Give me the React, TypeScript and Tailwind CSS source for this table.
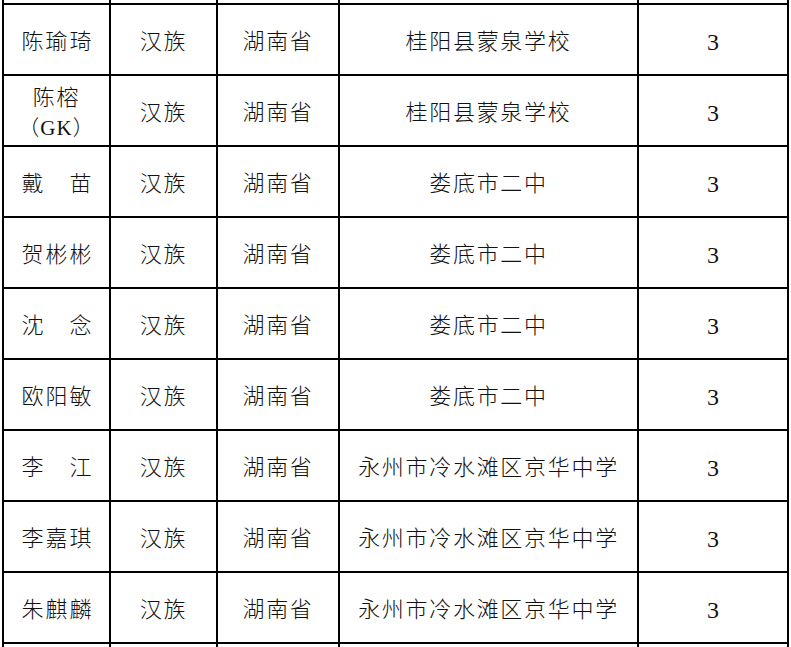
import React from "react";

type Row = {
  name: string[];
  note?: string;
  school: string;
};

const rows: Row[] = [
  { name: ["陈", "瑜", "琦"], school: "桂阳县蒙泉学校" },
  { name: ["陈榕"], note: "（GK）", school: "桂阳县蒙泉学校" },
  { name: ["戴", "苗"], school: "娄底市二中" },
  { name: ["贺", "彬", "彬"], school: "娄底市二中" },
  { name: ["沈", "念"], school: "娄底市二中" },
  { name: ["欧", "阳", "敏"], school: "娄底市二中" },
  { name: ["李", "江"], school: "永州市冷水滩区京华中学" },
  { name: ["李", "嘉", "琪"], school: "永州市冷水滩区京华中学" },
  { name: ["朱", "麒", "麟"], school: "永州市冷水滩区京华中学" },
];

const font = {
  fontFamily: '"Liberation Serif", "Noto Sans CJK SC", serif',
};

function Cell({ children }: { children?: React.ReactNode }) {
  return (
    <div className="flex items-center justify-center bg-white pt-[5px] text-[22px] font-light leading-none text-[#111]">
      {children}
    </div>
  );
}

function NameCell({ row }: { row: Row }) {
  if (row.note) {
    return (
      <div className="flex flex-col items-center justify-center bg-white pt-[4px] text-[22px] font-light leading-[30px] text-[#111]">
        <span className="tracking-[1.7px]">{row.name[0]}</span>
        <span className="text-[21px] tracking-[1px]">{row.note}</span>
      </div>
    );
  }
  return (
    <Cell>
      <span className="flex w-[70px] justify-between">
        {row.name.map((c, i) => (
          <span key={i}>{c}</span>
        ))}
      </span>
    </Cell>
  );
}

export default function App() {
  return (
    <div className="h-[647px] w-[791px] overflow-hidden bg-white" style={font}>
      <div className="ml-[2px] grid w-[787px] grid-cols-[105px_105px_120px_297px_148px] grid-rows-[3px_repeat(10,69px)] gap-[2px] bg-black px-[2px]">
        {[0, 1, 2, 3, 4].map((i) => (
          <div key={"top" + i} className="bg-white" />
        ))}
        {rows.map((r, i) => (
          <React.Fragment key={i}>
            <NameCell row={r} />
            <Cell>
              <span className="tracking-[1.7px]">汉族</span>
            </Cell>
            <Cell>
              <span className="tracking-[1.7px]">湖南省</span>
            </Cell>
            <Cell>
              <span className="tracking-[1.7px]">{r.school}</span>
            </Cell>
            <Cell>
              <span className="text-[24px] font-normal">3</span>
            </Cell>
          </React.Fragment>
        ))}
        {[0, 1, 2, 3, 4].map((i) => (
          <div key={"bot" + i} className="bg-white" />
        ))}
      </div>
    </div>
  );
}
